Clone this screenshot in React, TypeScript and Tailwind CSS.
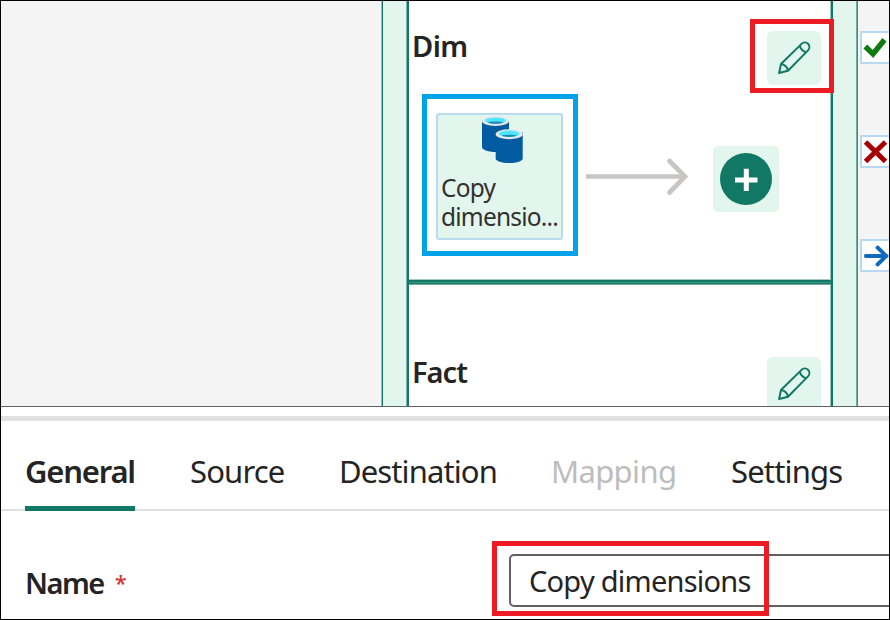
import type { ReactNode } from "react";

const tabs = [
  { label: "General", box: "w-[164px]", text: "-ml-px font-semibold text-[#242424] tracking-[-1.2px]" },
  { label: "Source", box: "w-[149px]", text: "text-[#242424] tracking-[-0.85px]" },
  { label: "Destination", box: "w-[213px]", text: "text-[#242424] tracking-[-0.9px]" },
  { label: "Mapping", box: "w-[179px]", text: "-ml-px text-[#bdbdbd] tracking-[-0.65px]" },
  { label: "Settings", box: "w-[120px]", text: "text-[#242424] tracking-[-0.85px]" },
];

function EditButton() {
  return (
    <button className="h-[54px] w-[54px] shrink-0 rounded-[6px] bg-[#e3f6ed]">
      <svg width="54" height="54" viewBox="0 0 54 54" fill="none" stroke="#117865" strokeWidth="2" strokeLinejoin="round">
        <path d="M12.1 42 14 33 34.3 13.1C36.3 11.1 39.2 11.1 41 12.8C42.8 14.6 42.8 17.5 41 19.4L21 39.7Z" />
        <path d="M32.7 14.9C33.8 18 36 20.4 39.2 21.4M14.3 33C18 33.7 20.3 36 21 39.7" />
      </svg>
    </button>
  );
}

function CopyIcon() {
  return (
    <svg className="ml-[44px] block shrink-0" width="44" height="48" viewBox="0 0 44 48">
      <path d="M0 6V32C0 34.7 6 37 13.5 37S27 34.7 27 32V6Z" fill="#005ba1" />
      <ellipse cx="13.5" cy="6" rx="13.5" ry="5" fill="#e8e8e8" />
      <ellipse cx="13.5" cy="5.6" rx="10.4" ry="3.2" fill="#50e6ff" />
      <path d="M5.5 7.4C8.5 6.2 18.5 6.2 21.5 7.4C18.5 9.2 8.5 9.2 5.5 7.4Z" fill="#198ab3" />
      <path d="M13.7 17.5V43.5C13.7 46.2 19.5 48 27.2 48S40.7 46.2 40.7 43.5V17.5Z" fill="#005ba1" />
      <ellipse cx="27.2" cy="19.2" rx="13.5" ry="5" fill="#e8e8e8" />
      <ellipse cx="27.2" cy="18.8" rx="10.4" ry="3.2" fill="#50e6ff" />
      <path d="M19.2 20.6C22.2 19.4 32.2 19.4 35.2 20.6C32.2 22.4 22.2 22.4 19.2 20.6Z" fill="#198ab3" />
    </svg>
  );
}

function PortTile({ children }: { children: ReactNode }) {
  return (
    <div className="h-[33px] w-[29px] shrink-0 border-2 border-r-0 border-[#b9d8f1] bg-white">
      <svg width="27" height="29" viewBox="0 0 27 29" fill="none">
        {children}
      </svg>
    </div>
  );
}

export default function App() {
  return (
    <div className="relative flex h-[620px] w-[890px] flex-col overflow-hidden border border-black bg-white font-['Noto_Sans',sans-serif]">
      <div className="flex h-[406px] shrink-0 overflow-hidden border-b border-[#616161] bg-[#f4f4f4]">
        <div className="w-[380px] shrink-0" />
        <div className="flex h-[405px] w-[477px] shrink-0 border-x border-l-[#8fc0b4] border-r-[#3a8d7d] bg-[#e3f6ed] px-[25px] shadow-[inset_1px_0_0_#117865,inset_-1px_0_0_#6fae9f]">
          <div className="flex w-[426px] shrink-0 flex-col border-x-2 border-[#117865] bg-white shadow-[-1px_0_0_#7db5a8,inset_-1px_0_0_#9cc8bd]">
            <section className="h-[278px] shrink-0">
              <div className="flex justify-between pl-[3px] pr-[10px] pt-[30px]">
                <h2 className="-mt-px h-[32px] text-[29px] font-semibold leading-[32px] tracking-[-0.6px] text-[#242424]">Dim</h2>
                <EditButton />
              </div>
              <div className="flex items-start pl-[27px] pt-[28px]">
                <div className="flex h-[127px] w-[127px] shrink-0 flex-col rounded-[3px] border-2 border-[#b9dbf1] bg-[#e3f6ed]">
                  <CopyIcon />
                  <p className="-mr-1 mt-[10px] pl-[3px] text-[24.5px] leading-[29px] tracking-[-0.8px] text-[#323130]">
                    Copy dimensio...
                  </p>
                </div>
                <svg className="ml-[23px] mt-[43px] shrink-0" width="104" height="40" viewBox="0 0 104 40" fill="none" stroke="#c8c6c4" strokeWidth="4.7">
                  <path d="M0 20.5H99" />
                  <path d="M83.5 5 99 20.5 83.5 36.5" strokeLinecap="round" />
                </svg>
                <button className="ml-[23px] mt-[33px] flex h-[66px] w-[66px] shrink-0 items-center justify-center rounded-[5px] bg-[#e3f6ed]">
                  <svg width="52" height="52" viewBox="0 0 52 52">
                    <circle cx="26" cy="26" r="26" fill="#117865" />
                    <path d="M15 27H37.5M26.3 15.7V38" stroke="white" strokeWidth="5" />
                  </svg>
                </button>
              </div>
            </section>
            <div className="h-[6px] shrink-0 border-b border-t border-b-[#71ae9f] border-t-[#a5cabe] bg-[#117865] pt-[2px]">
              <div className="h-px bg-[#439483]" />
            </div>
            <section className="flex shrink-0 justify-between pl-[3px] pr-[10px] pt-[72px]">
              <h2 className="-mt-px h-[32px] text-[29px] font-semibold leading-[32px] tracking-[-1px] text-[#242424]">Fact</h2>
              <EditButton />
            </section>
          </div>
        </div>
        <div className="flex w-[31px] shrink-0 flex-col gap-[71px] pl-[2px] pt-[30px]">
          <PortTile>
            <path d="M3.3 13.5 11 21 22.5 6.8" stroke="#107c10" strokeWidth="5.4" />
          </PortTile>
          <PortTile>
            <path d="M3.5 5 23.5 24.5M23.5 5 3.5 24.5" stroke="#a80000" strokeWidth="5" />
          </PortTile>
          <PortTile>
            <path d="M3.8 15H24.5M15.5 6.5 24.3 15 15.5 23.5" stroke="#0f6cbd" strokeWidth="3.9" strokeLinecap="round" />
          </PortTile>
        </div>
      </div>

      <div className="mt-[9px] h-[5px] shrink-0 bg-[#e0e0e0]" />

      <nav className="flex h-[90px] shrink-0 border-b-2 border-[#e0e0e0] pl-[25px] pt-[30px] text-[31px] leading-[40px]">
        {tabs.map((t, i) => (
          <div key={t.label} className={`relative shrink-0 ${t.box}`}>
            <span className={t.text}>{t.label}</span>
            {i === 0 && <div className="absolute left-[-1px] top-[55px] h-[5px] w-[110px] bg-[#117865]" />}
          </div>
        ))}
      </nav>

      <div className="flex pl-[24px] pt-[43px]">
        <label className="flex w-[484px] shrink-0 gap-[11px] pt-[9px] text-[29px] font-semibold leading-[40px] tracking-[-1.5px] text-[#242424]">
          Name <span className="-mt-px text-[22px] font-medium text-[#d13438]">*</span>
        </label>
        <div className="h-[53px] w-[400px] shrink-0 rounded-[5px] border-2 border-[#616161] bg-white pl-[18px] pt-[5px] text-[29px] leading-[40px] tracking-[-0.75px] text-[#242424]">
          Copy dimensions
        </div>
      </div>

      <div className="absolute left-[749px] top-[18px] h-[74px] w-[84px] border-[5px] border-[#ed1c24]" />
      <div className="absolute left-[421px] top-[93px] h-[162px] w-[156px] border-[5px] border-[#00a2e8]" />
      <div className="absolute left-[491px] top-[540px] h-[75px] w-[277px] border-[5px] border-[#ed1c24]" />
    </div>
  );
}
